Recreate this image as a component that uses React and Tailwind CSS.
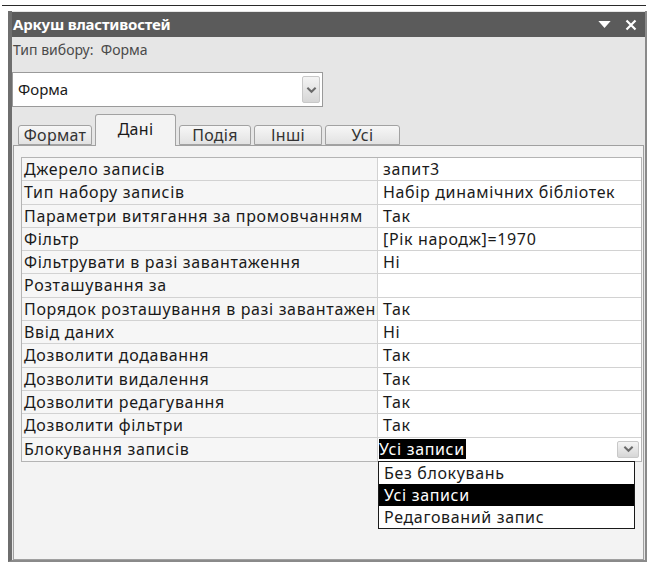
import { useState } from 'react'

const rows = [
  ['Джерело записів', 'запит3'],
  ['Тип набору записів', 'Набір динамічних бібліотек'],
  ['Параметри витягання за промовчанням', 'Так'],
  ['Фільтр', '[Рік народж]=1970'],
  ['Фільтрувати в разі завантаження', 'Ні'],
  ['Розташування за', ''],
  ['Порядок розташування в разі завантаження', 'Так'],
  ['Ввід даних', 'Ні'],
  ['Дозволити додавання', 'Так'],
  ['Дозволити видалення', 'Так'],
  ['Дозволити редагування', 'Так'],
  ['Дозволити фільтри', 'Так'],
]

const tabs = [
  { label: 'Формат', w: 'w-[74px]' },
  { label: 'Дані', w: 'w-[81px]' },
  { label: 'Подія', w: 'w-[72px]' },
  { label: 'Інші', w: 'w-[68px]' },
  { label: 'Усі', w: 'w-[75px]' },
]

const lockOptions = ['Без блокувань', 'Усі записи', 'Редагований запис']

function Chevron({ className }) {
  return (
    <svg viewBox="0 0 12 8" className={className}>
      <path d="M1.5 1.5 L6 6 L10.5 1.5" fill="none" stroke="#6a6a6a" strokeWidth="2.2" />
    </svg>
  )
}

function DropButton({ className }) {
  return (
    <div className={`flex items-center justify-center rounded-[2px] border border-[#c8c8c8] bg-gradient-to-b from-[#f4f4f4] to-[#d6d6d6] ${className}`}>
      <Chevron className="w-[11px] h-[8px]" />
    </div>
  )
}

export default function App() {
  const [active, setActive] = useState(1)
  const [lock, setLock] = useState(1)

  return (
    <div className="w-[648px] h-[567px] bg-white pt-[5px] font-['Noto_Sans',sans-serif] text-[16px] tracking-[0.65px] text-[#1a1a1a] overflow-hidden">
      <div className="h-px bg-[#2a2a2a] ml-[2px] mr-[2px]" />

      {/* window frame */}
      <div className="mt-[5px] ml-[8px] w-[639px] h-[551px] border-l-[4px] border-r-[2px] border-b-[2px] border-l-[#6e6e6e] border-r-[#8a8a8a] border-b-[#8a8a8a] bg-[#e6e6e6] flex flex-col relative">
        <div className="h-[25px] bg-[#5b5b5b] flex items-center pl-[1px] pr-[8px] mt-[1px]">
          <span className="text-white font-bold text-[15px] tracking-[-0.2px]">Аркуш властивостей</span>
          <div className="ml-auto flex items-center gap-[14px]">
            <svg viewBox="0 0 14 8" className="w-[13px] h-[7px]">
              <path d="M0 0 H14 L7 8 Z" fill="#fff" />
            </svg>
            <svg viewBox="0 0 12 12" className="w-[12px] h-[12px]">
              <path d="M1.5 1.5 L10.5 10.5 M10.5 1.5 L1.5 10.5" stroke="#fff" strokeWidth="2.2" />
            </svg>
          </div>
        </div>

        <div className="h-[24px] flex items-center pl-[1px] text-[14px] tracking-normal text-[#4a4a4a]">Тип вибору:&nbsp; Форма</div>

        <div className="mt-[11px] w-[311px] h-[35px] border border-[#9a9a9a] bg-white flex items-center pl-[5px] pr-[2px]">
          <span className="text-[15px] tracking-normal">Форма</span>
          <DropButton className="ml-auto w-[18px] h-[27px]" />
        </div>

        {/* tabs */}
        <div className="mt-[7px] h-[31px] flex items-end gap-[3px] pl-[6px] relative z-10">
          {tabs.map((t, i) => (
            <button
              key={t.label}
              onClick={() => setActive(i)}
              className={`${t.w} flex items-center justify-center rounded-t-[3px] border border-[#a2a2a2] tracking-[0.3px] ${
                i === active
                  ? 'h-[32px] -mb-px border-b-0 bg-[#f3f3f3] pb-[4px] text-[16px]'
                  : 'h-[20px] bg-gradient-to-b from-[#f7f7f7] to-[#e2e2e2] text-[16px] text-[#333]'
              }`}
            >
              {t.label}
            </button>
          ))}
        </div>

        {/* tab page */}
        <div className="flex-1 ml-px mr-px border border-[#a0a0a0] bg-[#f3f3f3] pt-[11px] pl-[7px] pr-[1px] relative">
          <div className="border border-[#b4b4b4] bg-white">
            {rows.map(([k, v]) => (
              <div key={k} className="h-[23.3px] flex border-b border-[#d2d2d2]">
                <div className="w-[356px] shrink-0 bg-[#f6f6f6] border-r border-[#d2d2d2] pl-[2px] leading-[22px] whitespace-nowrap overflow-hidden">{k}</div>
                <div className="flex-1 pl-[5px] leading-[22px] whitespace-nowrap overflow-hidden">{v}</div>
              </div>
            ))}
            <div className="h-[23.3px] flex">
              <div className="w-[356px] shrink-0 bg-[#f6f6f6] border-r border-[#d2d2d2] pl-[2px] leading-[22px] whitespace-nowrap">Блокування записів</div>
              <div className="flex-1 pl-[1px] flex items-center pr-[2px]">
                <span className="bg-black text-white leading-[20px] pr-[1px]">{lockOptions[lock]}</span>
                <DropButton className="ml-auto w-[22px] h-[17px]" />
              </div>
            </div>
          </div>

          <div className="absolute left-[364px] top-[315px] w-[257px] border border-[#1a1a1a] bg-white">
            {lockOptions.map((o, i) => (
              <div
                key={o}
                onClick={() => setLock(i)}
                className={`h-[22px] leading-[22px] pl-[5px] ${i === lock ? 'bg-black text-white' : ''}`}
              >
                {o}
              </div>
            ))}
          </div>
        </div>
      </div>
    </div>
  )
}
